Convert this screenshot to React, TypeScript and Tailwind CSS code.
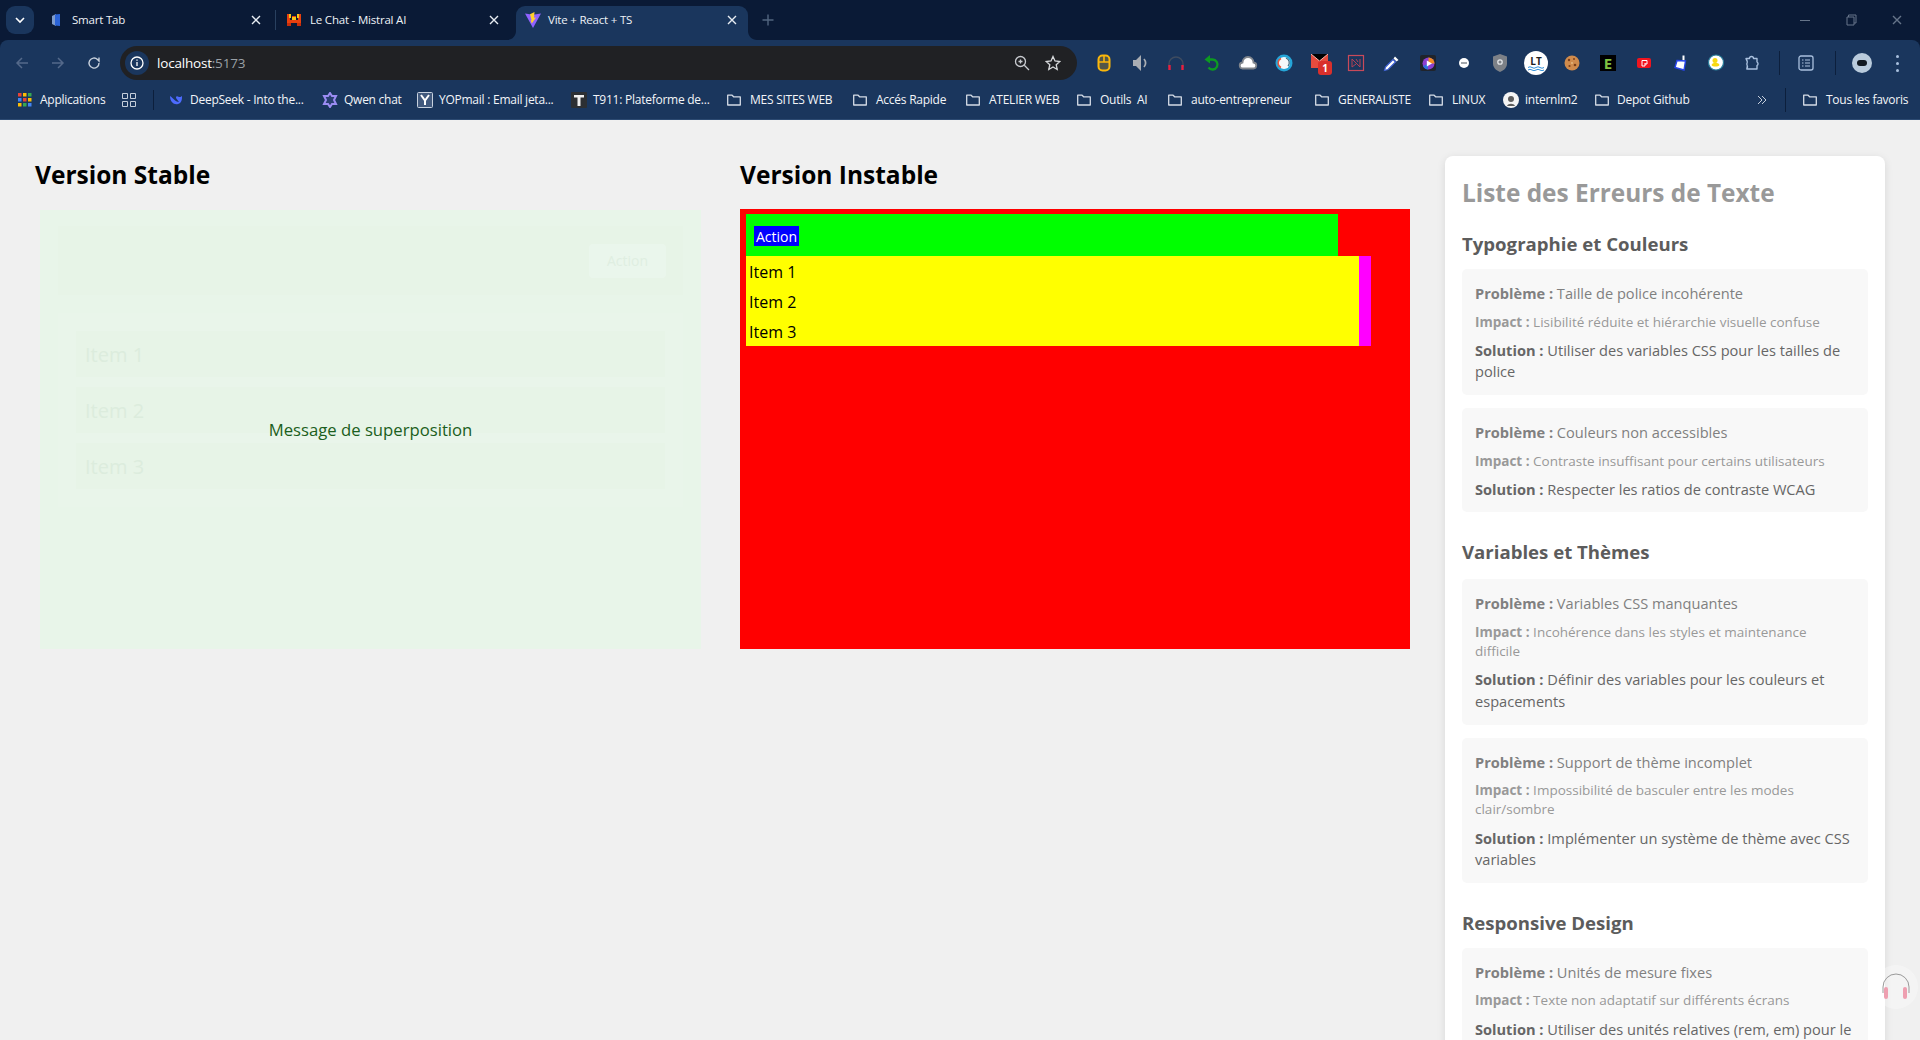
import React from "react";

const S = ({ children, w = 16, h = 16, vb = "0 0 16 16" }: { children: React.ReactNode; w?: number; h?: number; vb?: string }) => (
  <svg width={w} height={h} viewBox={vb} className="shrink-0" fill="none">{children}</svg>
);

const Folder = () => (
  <S>
    <path d="M1.7 3.2h4.4l1.5 1.6h6.7v8.2H1.7z" stroke="#d5dce6" strokeWidth="1.3" strokeLinejoin="round" />
  </S>
);

const Close = ({ c = "#e8edf3" }: { c?: string }) => (
  <svg width="10" height="10" viewBox="0 0 10 10" className="shrink-0"><path d="M1 1l8 8M9 1L1 9" stroke={c} strokeWidth="1.4" /></svg>
);

const Smart = () => (
  <S><path d="M4 4l4-2v12l-4-2z" fill="#7f9ccc" /><path d="M7 2.5l5-.5v12l-5-.5z" fill="#2a63d8" /></S>
);
const Mistral = () => (
  <S>
    <path d="M1 14V2h3v6h2V4h4v4h2V2h3v12h-4v-3H5v3z" fill="#e8400f" />
    <path d="M3 2h2v4H3zM11 2h2v4h-2zM6 5h4v3H6z" fill="#f5c518" />
    <path d="M1 11h4v3H1zM11 11h4v3h-4z" fill="#c82d0a" />
  </S>
);
const Vite = () => (
  <S w={18} h={18} vb="0 0 18 18">
    <path d="M1 2.5l8 1.3 8-1.3-8 14.5z" fill="#8f62ff" />
    <path d="M10.5 1L6 3.2l1.6 6-1 .2 1.2 3.2L12 6.4l-2 .3z" fill="#ffd02c" />
  </S>
);

const Tab = ({ icon, title, active, sep }: { icon: React.ReactNode; title: string; active?: boolean; sep?: boolean }) => (
  <div className={`relative flex h-[34px] w-[232px] shrink-0 items-center rounded-t-[9px] pb-[6px] pl-[8px] pr-[11px] ${active ? "bg-[#1a365d]" : ""}`}>
    <span className="flex w-[24px] shrink-0 items-center">{icon}</span>
    <span className="flex-1 whitespace-nowrap text-[11.5px] leading-[16px] tracking-[-0.2px] text-[#eef2f7]">{title}</span>
    <Close />
    {sep && <span className="absolute right-[-4px] top-[4px] h-[20px] w-px bg-[#29405f]" />}
    {active && (
      <>
        <svg width="9" height="9" viewBox="0 0 9 9" className="absolute bottom-0 left-[-9px]"><path d="M9 0v9H0c5 0 9-4 9-9z" fill="#1a365d" /></svg>
        <svg width="9" height="9" viewBox="0 0 9 9" className="absolute bottom-0 right-[-9px]"><path d="M0 0v9h9C4 9 0 5 0 0z" fill="#1a365d" /></svg>
      </>
    )}
  </div>
);

const icons: React.ReactNode[] = [
  <S key="mouse" w={20} h={20} vb="0 0 20 20"><rect x="4.5" y="2.5" width="11" height="15" rx="4" stroke="#fbb70b" strokeWidth="2" fill="#fbb70b" fillOpacity=".25" /><path d="M5 9h10M10 3v6" stroke="#fbb70b" strokeWidth="1.6" /></S>,
  <S key="speaker" w={20} h={20} vb="0 0 20 20"><path d="M3 7h3l5-5v16l-5-5H3z" fill="#a9adb3" /><path d="M14 6c2 2.500 2 5.500 0 8" stroke="#a9adb3" strokeWidth="1.7" /></S>,
  <S key="headphones" w={20} h={20} vb="0 0 20 20"><path d="M3 14v-3a7 7 0 0114 0v3" stroke="#3f4c60" strokeWidth="1.4" /><path d="M3.500 12v5M16.500 12v5" stroke="#e81f3f" strokeWidth="2.400" /></S>,
  <S key="undo" w={20} h={20} vb="0 0 20 20"><path d="M6.500 6.500h4a5 5 0 11-4 8" stroke="#0d9a22" strokeWidth="2.300" /><path d="M8 2L2.500 6.500 8 10.500z" fill="#0d9a22" /></S>,
  <S key="cloud" w={20} h={20} vb="0 0 20 20"><path d="M5 15.500a3 3 0 01-.5-6 5.500 5.500 0 0111 0 3 3 0 01-.5 6z" fill="#fff" stroke="#80858c" strokeWidth="1.800" /></S>,
  <S key="circle" w={20} h={20} vb="0 0 20 20"><circle cx="10" cy="10" r="8.500" fill="#25a5d8" /><circle cx="10" cy="10" r="6" fill="#f5f8fa" /><path d="M7 5.500a5 5 0 000 9" stroke="#e2553c" strokeWidth="1.400" /><path d="M12 5a5 5 0 012 8" stroke="#39677f" strokeWidth="1.200" /></S>,
  <div key="mail" className="relative h-[20px] w-[20px]">
    <svg width="17" height="14" viewBox="0 0 17 14" className="absolute left-[1px] top-[1px]"><path d="M0 0h17v14H0z" fill="#e54b3e" /><path d="M0 0l8.500 7L17 0" stroke="#f6b6ae" strokeWidth="1" /></svg>
    <span className="absolute left-[8px] top-[8px] flex h-[14px] w-[14px] items-center justify-center rounded-[3px] bg-[#d9302c] text-[10px] font-bold leading-none text-white">1</span>
  </div>,
  <S key="n" w={18} h={18} vb="0 0 18 18"><rect x="1.500" y="1.500" width="15" height="15" stroke="#c84a5a" strokeWidth="1.200" /><path d="M5 13V5l8 8V5M5 13l4-3M9 5l2 3" stroke="#b54155" strokeWidth="1" /></S>,
  <S key="dropper" w={20} h={20} vb="0 0 20 20"><path d="M13 3.500l3.500 3.500-2 1.500-3-3z" fill="#fff" /><path d="M11 6.500L3.500 14l-1 3.500 3.500-1L13.500 9z" fill="#fff" stroke="#3d5fd0" strokeWidth="1.200" /></S>,
  <div key="play" className="flex h-[16px] w-[16px] items-center justify-center rounded-[2px] bg-[#20242b]">
    <svg width="13" height="13" viewBox="0 0 13 13"><circle cx="6.500" cy="6.500" r="6" fill="#8c3fd1" /><path d="M6.500.5a6 6 0 016 6h-6z" fill="#f38b24" /><path d="M1 9a6 6 0 005 3.500V7z" fill="#2c6fe0" /><path d="M4.800 3.500L10 6.500 4.800 9.500z" fill="#fff" /></svg>
  </div>,
  <S key="bubble"><circle cx="8" cy="8" r="5" fill="#fff" /><rect x="5" y="7" width="6" height="2" fill="#a4a8ad" /></S>,
  <S key="shield" w={18} h={20} vb="0 0 18 20"><path d="M9 1l7 2.500v7c0 4-3 7-7 8.500-4-1.500-7-4.500-7-8.500v-7z" fill="#7d8187" /><circle cx="9" cy="9" r="2.200" stroke="#e3e5e8" strokeWidth="1.300" /></S>,
  <div key="lt" className="flex h-[24px] w-[24px] flex-col items-center justify-center rounded-full bg-white">
    <span className="text-[10px] font-bold leading-[10px] text-[#1d1d1f]">LT</span>
    <svg width="16" height="5" viewBox="0 0 16 5"><path d="M0 1.500q2-1.500 4 0t4 0 4 0 4 0M0 4q2-1.500 4 0t4 0 4 0 4 0" stroke="#2f8fd8" strokeWidth="1" fill="none" /></svg>
  </div>,
  <S key="cookie" w={18} h={18} vb="0 0 18 18"><circle cx="9" cy="9" r="7.500" fill="#d08b4c" /><circle cx="6" cy="6" r="1.200" fill="#7b3f1a" /><circle cx="11" cy="5" r="1" fill="#7b3f1a" /><circle cx="12" cy="11" r="1.300" fill="#7b3f1a" /><circle cx="6.500" cy="12" r="1.100" fill="#7b3f1a" /><circle cx="9" cy="9" r=".8" fill="#f4d9a4" /></S>,
  <div key="e" className="flex h-[16px] w-[16px] items-center justify-center bg-black">
    <span className="text-[15px] font-bold leading-none text-[#7fc241]">E</span>
  </div>,
  <S key="red"><rect x="1" y="3" width="14" height="10" rx="2" fill="#f0141e" /><path d="M6 5.500h5V9H9M6 5.500V11h3V8" stroke="#fff" strokeWidth="1" /></S>,
  <S key="brush" w={18} h={18} vb="0 0 18 18"><path d="M11.500 1.500h2V7h-2z" fill="#fff" /><path d="M6 6.500l8.500.5L13 16 4 13.500z" fill="#fff" stroke="#2743e8" strokeWidth="1.400" /></S>,
  <S key="duck" w={18} h={18} vb="0 0 18 18"><circle cx="9" cy="8.500" r="7.500" fill="#fff" stroke="#2a7f9c" strokeWidth="1.200" /><circle cx="8" cy="6.500" r="2.500" fill="#f7d911" /><path d="M4.500 11c1-3 7-3 8 0-1 2-7 2-8 0z" fill="#f7d911" /></S>,
  <S key="puzzle" w={18} h={18} vb="0 0 18 18"><path d="M3 4.500h3.500a2 2 0 014 0H14v3.500a2 2 0 010 3.500V15H3.800c1-2 1-3 0-5 1-2 .5-3.500-.8-5.500z" stroke="#a9c0de" strokeWidth="1.400" strokeLinejoin="round" /></S>,
];

const bookmarks: { icon: React.ReactNode; label: string; cls: string }[] = [
  { icon: <Folder />, label: "MES SITES WEB", cls: "w-[126px] gap-[8px]" },
  { icon: <Folder />, label: "Accés Rapide", cls: "w-[113px] gap-[8px]" },
  { icon: <Folder />, label: "ATELIER WEB", cls: "w-[111px] gap-[8px]" },
  { icon: <Folder />, label: "Outils  AI", cls: "w-[91px] gap-[8px]" },
  { icon: <Folder />, label: "auto-entrepreneur", cls: "w-[147px] gap-[8px]" },
  { icon: <Folder />, label: "GENERALISTE", cls: "w-[114px] gap-[8px]" },
  { icon: <Folder />, label: "LINUX", cls: "w-[75px] gap-[8px]" },
];

const Mark = ({ icon, label, cls }: { icon: React.ReactNode; label: string; cls: string }) => (
  <div className={`flex shrink-0 items-center ${cls}`}>
    {icon}
    <span className="whitespace-pre text-[12px] leading-[16px] tracking-[-0.25px] text-[#f3f5f8]">{label}</span>
  </div>
);

function Chrome() {
  return (
    <div className="bg-[#0a1a36]">
      <div className="flex h-[40px] items-start pl-[6px] pt-[6px]">
        <div className="mr-[6px] flex h-[28px] w-[28px] shrink-0 items-center justify-center rounded-[9px] bg-[#1a365d]">
          <svg width="10" height="8" viewBox="0 0 10 8"><path d="M1 2l4 4 4-4" stroke="#fff" strokeWidth="1.600" fill="none" /></svg>
        </div>
        <div className="flex gap-[6px]">
          <Tab icon={<Smart />} title="Smart Tab" sep />
          <Tab icon={<Mistral />} title="Le Chat - Mistral AI" />
          <Tab icon={<Vite />} title="Vite + React + TS" active />
        </div>
        <svg width="12" height="12" viewBox="0 0 12 12" className="ml-[14px] mt-[8px] shrink-0"><path d="M6 .5v11M.5 6h11" stroke="#52657f" strokeWidth="1.400" /></svg>
        <div className="ml-auto flex h-[28px] items-center">
          <span className="flex w-[46px] justify-center"><span className="h-px w-[10px] bg-[#66758a]" /></span>
          <span className="flex w-[46px] justify-center">
            <svg width="11" height="12" viewBox="0 0 11 12"><path d="M2.500 3V1h7.500v8H8M1 3h7v8H1z" stroke="#66758a" fill="none" /></svg>
          </span>
          <span className="flex w-[46px] justify-center"><Close c="#66758a" /></span>
        </div>
      </div>
      <div className="flex h-[46px] items-start rounded-t-[8px] bg-[#1a365d] pl-[4px] pt-[6px]">
        <span className="flex h-[34px] w-[36px] items-center justify-center">
          <svg width="14" height="14" viewBox="0 0 14 14"><path d="M13 7H2M7 2L2 7l5 5" stroke="#54698a" strokeWidth="1.500" fill="none" /></svg>
        </span>
        <span className="flex h-[34px] w-[36px] items-center justify-center">
          <svg width="14" height="14" viewBox="0 0 14 14"><path d="M1 7h11M7 2l5 5-5 5" stroke="#54698a" strokeWidth="1.500" fill="none" /></svg>
        </span>
        <span className="flex h-[34px] w-[36px] items-center justify-center">
          <svg width="14" height="14" viewBox="0 0 14 14"><path d="M12 7a5 5 0 11-1.500-3.500L12 5V1.500" stroke="#c6cfdb" strokeWidth="1.400" fill="none" /></svg>
        </span>
        <div className="ml-[8px] flex h-[34px] w-[957px] shrink-0 items-center rounded-full bg-[#202124] pl-[5px] pr-[16px]">
          <span className="flex h-[24px] w-[24px] shrink-0 items-center justify-center rounded-full bg-[#1a365d]">
            <svg width="14" height="14" viewBox="0 0 14 14"><circle cx="7" cy="7" r="6" stroke="#fff" strokeWidth="1.300" fill="none" /><path d="M7 6v4M7 3.500v1.300" stroke="#fff" strokeWidth="1.300" /></svg>
          </span>
          <span className="ml-[8px] flex-1 text-[13.5px] tracking-[-0.2px] text-white">localhost<span className="text-[#9aa0a6]">:5173</span></span>
          <svg width="16" height="16" viewBox="0 0 16 16" className="mr-[15px]"><circle cx="6.500" cy="6.500" r="5" stroke="#c9ccd1" strokeWidth="1.300" fill="none" /><path d="M10.300 10.300L15 15M4.500 6.500h4M6.500 4.500v4" stroke="#c9ccd1" strokeWidth="1.300" /></svg>
          <svg width="16" height="16" viewBox="0 0 16 16"><path d="M8 1.500l2 4.500 4.800.5-3.600 3.200 1 4.800L8 12l-4.200 2.500 1-4.800L1.200 6.500 6 6z" stroke="#d6d8db" strokeWidth="1.300" fill="none" /></svg>
        </div>
        <div className="ml-[9px] flex h-[34px] items-center">
          {icons.map((ic, i) => (
            <span key={i} className="flex h-[34px] w-[36px] items-center justify-center">{ic}</span>
          ))}
          <span className="ml-[9px] h-[24px] w-px bg-[#0c1f3c]" />
          <span className="ml-[17px] flex w-[18px] justify-center">
            <svg width="16" height="16" viewBox="0 0 16 16"><rect x="1" y="1" width="14" height="14" rx="2" stroke="#a9c0de" strokeWidth="1.300" fill="none" /><path d="M4 5h1.500M4 8h1.500M4 11h1.500M7 5h5M7 8h5M7 11h5" stroke="#a9c0de" strokeWidth="1.200" /></svg>
          </span>
          <span className="ml-[20px] h-[24px] w-px bg-[#0c1f3c]" />
          <span className="ml-[16px] flex h-[20px] w-[20px] items-center justify-center rounded-full bg-[#b9cbdc]">
            <span className="h-[6px] w-[10px] rounded-full bg-[#111820]" />
          </span>
          <span className="ml-[24px] flex w-[4px] flex-col gap-[4px]">
            <span className="h-[3px] w-[3px] rounded-full bg-[#a9c0de]" />
            <span className="h-[3px] w-[3px] rounded-full bg-[#a9c0de]" />
            <span className="h-[3px] w-[3px] rounded-full bg-[#a9c0de]" />
          </span>
        </div>
      </div>
      <div className="flex h-[34px] items-center border-b border-[#2c4a72] bg-[#1a365d] pb-[6px] pl-[18px]">
        <Mark
          cls="w-[104px] gap-[8px]"
          label="Applications"
          icon={
            <svg width="14" height="14" viewBox="0 0 14 14" className="shrink-0">
              <path d="M0 0h3.500v3.500H0z" fill="#e94235" /><path d="M5 0h3.500v3.500H5z" fill="#fbbc04" /><path d="M10 0h3.500v3.500H10z" fill="#34a853" />
              <path d="M0 5h3.500v3.500H0z" fill="#4285f4" /><path d="M5 5h3.500v3.500H5z" fill="#e94235" /><path d="M10 5h3.500v3.500H10z" fill="#fbbc04" />
              <path d="M0 10h3.500v3.500H0z" fill="#fbbc04" /><path d="M5 10h3.500v3.500H5z" fill="#34a853" /><path d="M10 10h3.500v3.500H10z" fill="#4285f4" />
            </svg>
          }
        />
        <svg width="14" height="14" viewBox="0 0 14 14" className="shrink-0"><path d="M.5.500h5v5h-5zM8.500.500h5v5h-5zM.5 8.500h5v5h-5zM8.500 8.500h5v5h-5z" stroke="#c5cedb" fill="none" /></svg>
        <span className="ml-[17px] mr-[14px] h-[20px] w-px bg-[#0c1f3c]" />
        <Mark cls="w-[154px] gap-[6px]" label="DeepSeek - Into the..." icon={<S><path d="M2 4c0 6 4 9 8 8s4-5 4-8c-1 1-2 1-3 1-2-1-3-1-3 1l3 4c-3 0-5-3-9-6z" fill="#4d6bfe" /></S>} />
        <Mark cls="w-[95px] gap-[6px]" label="Qwen chat" icon={<S><path d="M8 1l2 3h4l-2 4 2 4h-4l-2 3-2-3H2l2-4-2-4h4z" stroke="#9b8cf2" strokeWidth="2" fill="#2a3f72" /></S>} />
        <Mark cls="w-[154px] gap-[6px]" label="YOPmail : Email jeta..." icon={<S><rect x=".5" y=".5" width="15" height="15" rx="1" fill="#41597d" stroke="#c7d1de" /><path d="M4 3l4 5.500L12 3M8 8.500V13" stroke="#fff" strokeWidth="2" fill="none" /></S>} />
        <Mark cls="w-[155px] gap-[6px]" label="T911: Plateforme de..." icon={<S><rect width="16" height="16" rx="1" fill="#2c2f33" /><path d="M3 3h10v2.500H9.500V14h-3V5.500H3z" fill="#f0f0f0" /></S>} />
        {bookmarks.map((b) => <Mark key={b.label} {...b} />)}
        <Mark
          cls="w-[91px] gap-[6px]"
          label="internlm2"
          icon={<S><circle cx="8" cy="8" r="8" fill="#f5f5f5" /><circle cx="8" cy="7" r="3" fill="#5d5d5d" /><path d="M4 14c1-3 7-3 8 0" fill="#5d5d5d" /></S>}
        />
        <Mark cls="w-[163px] gap-[7px]" icon={<Folder />} label="Depot Github" />
        <svg width="10" height="10" viewBox="0 0 10 10" className="shrink-0"><path d="M1 1l4 4-4 4M5 1l4 4-4 4" stroke="#c5cedb" fill="none" /></svg>
        <span className="ml-[18px] mr-[16px] h-[24px] w-px bg-[#0c1f3c]" />
        <Mark cls="w-[110px] gap-[8px]" icon={<Folder />} label="Tous les favoris" />
      </div>
    </div>
  );
}

const Card = ({ p, i, s }: { p: string; i: string; s: string }) => (
  <div className="flex flex-col gap-[8px] rounded-[5px] bg-[#f8f8f8] px-[13px] pb-[12px] pt-[14px] text-[14.6px] leading-[21.6px]">
    <p className="text-[#808080]"><strong className="font-bold">Problème :</strong> {p}</p>
    <p className="pr-[12px] text-[13.5px] leading-[19.2px] text-[#999]"><strong className="font-bold">Impact :</strong> {i}</p>
    <p className="text-[#666]"><strong className="font-bold">Solution :</strong> {s}</p>
  </div>
);

const H3 = ({ children }: { children: React.ReactNode }) => (
  <h3 className="text-[18.6px] font-bold leading-[26px] text-[#5c5c5c]">{children}</h3>
);

export default function App() {
  return (
    <div className="relative h-[1040px] w-[1920px] overflow-hidden bg-[#f0f0f0] font-['Open_Sans','Noto_Sans',sans-serif]">
      <Chrome />
      <div className="flex gap-[35px] px-[35px] pt-[36px]">
        <section className="w-[670px] shrink-0">
          <h2 className="text-[24.5px] font-bold leading-[38px] text-black">Version Stable</h2>
          <div className="relative ml-[5px] mt-[16px] h-[439px] w-[661px] bg-[#e8f5e9] px-[18px] pt-[16px]">
            <div className="flex h-[69px] items-center justify-end bg-[#e7f4e7] pr-[17px]">
              <div className="flex h-[34px] w-[77px] items-center justify-center rounded-[4px] bg-[#eaf6ec] text-[14px] text-[#dfeee1]">Action</div>
            </div>
            <div className="mt-[18px] flex flex-col gap-[10px] bg-[#e9f5ea] px-[18px] py-[18px]">
              {["Item 1", "Item 2", "Item 3"].map((t) => (
                <div key={t} className="flex h-[46px] items-center bg-[#e7f4e7] px-[9px] pt-[2px] text-[20px] text-[#dcecdd]">{t}</div>
              ))}
            </div>
            <div className="absolute inset-0 flex items-center justify-center text-[16.7px] text-[#1b5e20]">Message de superposition</div>
          </div>
        </section>
        <section className="w-[670px] shrink-0">
          <h2 className="text-[24.5px] font-bold leading-[38px] text-black">Version Instable</h2>
          <div className="mt-[15px] h-[440px] bg-[#ff0000] py-[5px] pl-[6px]">
            <div className="flex h-[42px] w-[592px] items-center bg-[#00ff00] pl-[8px] pt-[2px]">
              <span className="flex h-[20px] w-[45px] items-center justify-center bg-[#0000ff] text-[14px] text-white">Action</span>
            </div>
            <div className="w-[625px] border-r-[12px] border-[#ff00ff] bg-[#ffff00] px-[3px] text-[16px] leading-[30px] text-black">
              <div className="translate-y-[1px]">Item 1</div>
              <div className="translate-y-[1px]">Item 2</div>
              <div className="translate-y-[1px]">Item 3</div>
            </div>
          </div>
        </section>
        <aside className="h-[1200px] w-[440px] shrink-0 rounded-t-[8px] bg-white px-[17px] pt-[18px] shadow-[0_2px_8px_rgba(0,0,0,0.1)]">
          <h1 className="text-[24.4px] font-bold leading-[38px] text-[#999]">Liste des Erreurs de Texte</h1>
          <div className="mt-[19px]"><H3>Typographie et Couleurs</H3></div>
          <div className="mt-[12px] flex flex-col gap-[13px]">
            <Card p="Taille de police incohérente" i="Lisibilité réduite et hiérarchie visuelle confuse" s="Utiliser des variables CSS pour les tailles de police" />
            <Card p="Couleurs non accessibles" i="Contraste insuffisant pour certains utilisateurs" s="Respecter les ratios de contraste WCAG" />
          </div>
          <div className="mt-[27px]"><H3>Variables et Thèmes</H3></div>
          <div className="mt-[14px] flex flex-col gap-[13px]">
            <Card p="Variables CSS manquantes" i="Incohérence dans les styles et maintenance difficile" s="Définir des variables pour les couleurs et espacements" />
            <Card p="Support de thème incomplet" i="Impossibilité de basculer entre les modes clair/sombre" s="Implémenter un système de thème avec CSS variables" />
          </div>
          <div className="mt-[27px]"><H3>Responsive Design</H3></div>
          <div className="mt-[12px] flex flex-col gap-[13px]">
            <Card p="Unités de mesure fixes" i="Texte non adaptatif sur différents écrans" s="Utiliser des unités relatives (rem, em) pour le texte" />
          </div>
        </aside>
      </div>
      <div className="absolute left-[1874px] top-[965px] flex h-[44px] w-[44px] items-center justify-center rounded-full bg-white/30">
        <svg width="30" height="28" viewBox="0 0 30 28"><path d="M2 20v-6a13 13 0 0126 0v6" stroke="#9a9a9a" strokeWidth="1" fill="none" /><path d="M5 16v8M24 16v8" stroke="#ee9fb0" strokeWidth="4" strokeLinecap="round" /></svg>
      </div>
    </div>
  );
}
